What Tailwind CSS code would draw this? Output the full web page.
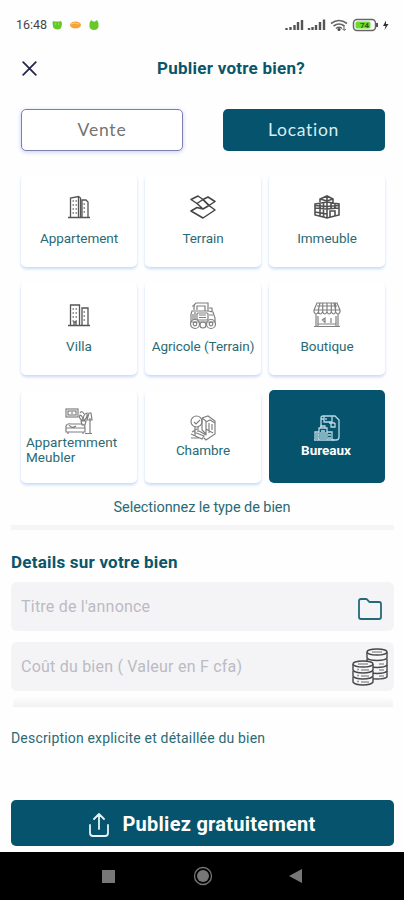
<!DOCTYPE html>
<html lang="fr">
<head>
    <meta charset="UTF-8">
    <meta name="viewport" content="width=device-width, initial-scale=1.0">
    <title>Publier votre bien</title>
    <script src="https://cdn.jsdelivr.net/npm/@tailwindcss/browser@4"></script>
</head>
<body class="bg-[#fefefe] font-[Roboto,sans-serif] text-[#2b6a74]">
    <div class="w-[404px] h-[900px] flex flex-col overflow-hidden">

        <!-- Status bar -->
        <div class="h-12 shrink-0 flex items-center pl-4 pr-[13px] pt-[2px] text-[#444]">
            <span class="w-[31px] text-[12.5px] leading-4 whitespace-nowrap">16:48</span>
            <svg class="ml-[5px]" width="47" height="12" viewBox="0 0 47 12">
                <path d="M1 2l2 .5h4L9 2l1 2-.5 4q-1 2.500-4 2.500T1 8L.5 4z" fill="#66c928"/>
                <path d="M3 5h1M6 5h1" stroke="#b9ed78"/>
                <ellipse cx="23.500" cy="6" rx="5.500" ry="3.500" fill="#f6a33a"/>
                <path d="M19 5q4-2 8 0" stroke="#ffcf83" fill="none"/>
                <path d="M39 1l2 1.500h2L45 1l1.500 3v4q-1 3-4.500 3t-4.500-3V4z" fill="#66c928"/>
            </svg>
            <svg class="ml-auto" width="106" height="14" viewBox="0 0 106 14">
                <g stroke="#555" stroke-width="2.400">
                    <path d="M1.500 12v-2M5.500 12V9M9.500 12V7M13 12V4M17 12V2"/>
                    <path d="M24 12v-2M27.500 12V9M31 12V7M35 12V4M39 12V1.500"/>
                </g>
                <g fill="none" stroke="#666" stroke-width="1.600">
                    <path d="M46 5.500q8-6 16 0M48.500 8q5.500-4 11 0M51 10.500q3-2.500 6 0"/>
                </g>
                <circle cx="54" cy="11.500" r="1.500" fill="#444"/>
                <path d="M59 8v4M57.500 11l1.500 1.500 2-1.500" stroke="#666" fill="none"/>
                <rect x="68.500" y="1.500" width="22" height="11" rx="3.500" fill="#fff" stroke="#666" stroke-width="1.500"/>
                <rect x="70.500" y="3.500" width="15" height="7" rx="1.500" fill="#6edb2c"/>
                <path d="M92 5v4" stroke="#555" stroke-width="2"/>
                <text x="75" y="10" font-size="8" font-weight="700" font-family="Roboto" fill="#2d5c14">74</text>
                <path d="M101 2.500L98 8h2.500l-1 4 4-6h-2.500z" fill="#333"/>
            </svg>
        </div>

        <!-- Header -->
        <div class="h-10 shrink-0 flex items-center pl-[22px]">
            <svg width="15" height="15" viewBox="0 0 15 15" fill="none" stroke="#28284a" stroke-width="1.800" stroke-linecap="round">
                <path d="M1.200 1.200l12.600 12.600M13.800 1.200L1.200 13.800"/>
            </svg>
            <h1 class="ml-[120px] pt-px text-[17px] font-bold text-[#0a556a] whitespace-nowrap tracking-[0.25px]">Publier votre bien?</h1>
        </div>

        <!-- Vente / Location -->
        <div class="mt-[21px] shrink-0 flex justify-between pl-[21px] pr-[19.5px]">
            <button class="w-[162px] h-[42px] rounded-[5px] border border-[#7f7fae] bg-white font-[Lato,sans-serif] text-[17.5px] tracking-[0.8px] text-[#747474] shadow-[0_1px_4px_#c0cdfa]">Vente</button>
            <button class="w-[162px] h-[42px] rounded-[5px] bg-[#05536c] font-[Lato,sans-serif] text-[17.5px] tracking-[0.7px] text-[#d5edf4]">Location</button>
        </div>

        <!-- Types de bien -->
        <div class="mt-[23px] ml-[21px] shrink-0 grid grid-cols-[repeat(3,116px)] auto-rows-[93px] gap-x-2 gap-y-[15px] text-[13.5px] leading-[15px] whitespace-nowrap">
            <div class="flex flex-col items-center pt-[21px] rounded-[5px] bg-white shadow-[0_2px_3px_#c6dcf8]">
                <svg width="22" height="24" viewBox="0 0 22 24" fill="none" stroke="#555" stroke-width="1.300">
                    <path d="M0 22.500h22M2.500 22V3l8-1.500 2 1.500v19M14 22V5h4l2 2v15M10.500 2v20"/>
                    <path d="M4.500 6h5M4.500 10h5M4.500 14h5M4.500 18h5M15.500 9h3M15.500 13h3M15.500 17h3" stroke="#777" stroke-dasharray="1.500 1.500"/>
                </svg>
                <span class="mt-[12px] tracking-[-0.05px]">Appartement</span>
            </div>
            <div class="flex flex-col items-center pt-[21px] rounded-[5px] bg-white shadow-[0_2px_3px_#c6dcf8]">
                <svg width="26" height="24" viewBox="0 0 26 24" fill="none" stroke="#444" stroke-width="1.500" stroke-linejoin="round">
                    <path d="M1 4.500L8 1l5 3.500-6 4zM13 4.500L18 2l7 4.500-6 4z"/>
                    <path d="M13 4.500L19 10.500 13 14 7 8.500M13 14l-6-1.500L1 16l12 7 12-8-6-4.500"/>
                </svg>
                <span class="mt-[12px] tracking-[-0.05px]">Terrain</span>
            </div>
            <div class="flex flex-col items-center pt-[21px] rounded-[5px] bg-white shadow-[0_2px_3px_#c6dcf8]">
                <svg width="26" height="24" viewBox="0 0 26 24" fill="none" stroke="#505050" stroke-width="1.600">
                    <path d="M1 9l12-2 12 2v11l-12 3-12-3zM6 7V4l7-3 6 3v4M13 1v22M1 13l12 1 12-1M1 17l12 2M6 8v13M9.500 7v15M17 8v6M21 8v6"/>
                    <path d="M16 22v-6h5v5M6 4l7 2 6-2M1 10.500l12 1 12-1"/>
                </svg>
                <span class="mt-[12px] tracking-[-0.05px]">Immeuble</span>
            </div>

            <div class="flex flex-col items-center pt-[21px] rounded-[5px] bg-white shadow-[0_2px_3px_#c9d9fa]">
                <svg width="22" height="24" viewBox="0 0 22 24" fill="none" stroke="#555" stroke-width="1.300">
                    <path d="M0 22.500h22M2.500 22V2h9v20M14 22V5h6v17M11.500 3v19"/>
                    <path d="M4.500 6h5M4.500 10h5M4.500 14h5M4.500 18h5M15.500 9h3M15.500 13h3M15.500 17h3" stroke="#777" stroke-dasharray="1.500 1.500"/>
                    <path d="M6 22v-3h2v3"/>
                </svg>
                <span class="mt-[12px]">Villa</span>
            </div>
            <div class="flex flex-col items-center pt-[20px] rounded-[5px] bg-white shadow-[0_2px_3px_#c9d9fa]">
                <svg width="28" height="28" viewBox="0 0 28 28" fill="none" stroke="#808080" stroke-width="1.200">
                    <path d="M5 8V3l2-2h12v8M8 8V4h8v5M3 9h16l5 1 2 6v4H2v-8zM3 4h3M20 6h3v4"/>
                    <rect x="8" y="11" width="11" height="7" rx="1"/>
                    <path d="M10 13h7M10 15.500h7M20 13h4M4 12v6M6 10v7"/>
                    <circle cx="6" cy="22" r="4.500"/><circle cx="6" cy="22" r="1.800"/>
                    <circle cx="14" cy="23" r="3"/><circle cx="22" cy="22" r="4.500"/><circle cx="22" cy="22" r="1.800"/>
                </svg>
                <span class="mt-[9px] tracking-[-0.05px]">Agricole (Terrain)</span>
            </div>
            <div class="flex flex-col items-center pt-[20px] rounded-[5px] bg-white shadow-[0_2px_3px_#c9d9fa]">
                <svg width="28" height="26" viewBox="0 0 28 26" fill="none" stroke="#808080" stroke-width="1.200">
                    <path d="M4 1h20l3 7v2q-2 4-4.300 0-2.200 4-4.400 0-2.100 4-4.300 0-2.200 4-4.400 0-2.200 4-4.300 0Q3 14 1 10V8zM1 8h26M4 4h20M5.500 8V12M9.700 1v10M14 1v10M18.300 1v10M22.500 1v10M7 1L5.300 8M21 1l1.700 7M3 12v12M25 12v12M1 24.500h26M5 14v10M23 14v10M5 22h18"/>
                    <path d="M9 18l3-2v5M9 18l3 2M18 16v5"/>
                </svg>
                <span class="mt-[11px] tracking-[-0.05px]">Boutique</span>
            </div>

            <div class="flex flex-col items-center pt-[17px] rounded-[5px] bg-white shadow-[0_2px_3px_#c6dcf8]">
                <svg width="28" height="28" viewBox="0 0 28 28" fill="none" stroke="#808080" stroke-width="1.200">
                    <rect x="1" y="2" width="12" height="8"/><rect x="3" y="4" width="8" height="4"/>
                    <path d="M7 5v2M1 25v-6q1-3 5-2h10q4 0 4 4v4H1zM1 21h19M4 18q3 4 7 1M3 25v2M18 25v2M20 26.500h7M25 26V11M22 13l2-7h2l1 7zM16 14h5l-1 4h-3zM18 14q-5-3-3-6 3 1 3 6 0-7 4-8 1 5-4 8M15 6q2-3 4 1"/>
                </svg>
                <span class="ml-[5px] self-start tracking-[0.05px]">Appartemment<br>Meubler</span>
            </div>
            <div class="flex flex-col items-center pt-[25px] rounded-[5px] bg-white shadow-[0_2px_3px_#c6dcf8]">
                <svg width="26" height="26" viewBox="0 0 26 26" fill="none" stroke="#808080" stroke-width="1.200">
                    <circle cx="6.500" cy="6.500" r="5.500"/><path d="M4 7l2 2 4-4M5 12v9M8 12v5M2 17l5-3M1 19l11 5 2-3-10-4M1 23h8M12 3l6-2 7 5v13l-9 6-2-2M12 3v12l4 4V6l-4-3M16 7l4-2 5 3M19 8v10M22 9v6M16 14l7 4M9 16l7 4"/>
                </svg>
                <span class="mt-[2px] tracking-[-0.05px]">Chambre</span>
            </div>
            <div class="flex flex-col items-center pt-[25px] rounded-[5px] bg-[#05536c] text-white">
                <svg width="26" height="26" viewBox="0 0 26 26" fill="none" stroke="#b8d9e3" stroke-width="1.300">
                    <path d="M7 12V3q0-2 2-2h12l4 4v17q0 3-3 3h-4M10 1v6h8V1M12 3v2M15 8h6M17 8v4h4V8M7 4h3"/>
                    <path d="M1 25v-8h4v-4h8v4h5v8zM0 25h20M5 17v8M13 17v8M7 13v-2h4v2M7 16h4M7 19h4M7 22h4M2 20h3M2 23h3M14 20h3M14 23h3"/>
                    <path d="M6 17h7v8H6zM1 18h3v7H1z" fill="#80b1c0" stroke="none"/>
                </svg>
                <span class="mt-[2px] mr-[2px] font-bold">Bureaux</span>
            </div>
        </div>

        <p class="mt-[14px] pt-px h-5 shrink-0 text-center text-[14.5px] leading-5 tracking-[-0.07px]">Selectionnez le type de bien</p>
        <div class="mt-[8px] ml-[11px] w-[383px] h-[5px] shrink-0 bg-[#f5f5f6]"></div>

        <!-- Details -->
        <h2 class="mt-[22px] ml-[11px] h-5 shrink-0 text-[17px] leading-5 font-bold text-[#0a556a] tracking-[0.22px]">Details sur votre bien</h2>
        <div class="mt-[10px] ml-[11px] w-[383px] h-[49px] shrink-0 rounded-md bg-[#f4f4f7] flex items-center justify-between pl-[10px] pr-3 text-[16px] text-[#bbbbc2]">
            <span class="tracking-[0.22px]">Titre de l'annonce</span>
            <svg class="mt-[5px]" width="24" height="22" viewBox="0 0 24 22" fill="none" stroke="#24697b" stroke-width="1.800" stroke-linejoin="round">
                <path d="M1 3q0-2 2-2h5q1 0 2 1.500T12 4h9q2 0 2 2v13q0 2-2 2H3q-2 0-2-2z"/>
            </svg>
        </div>
        <div class="mt-[11px] ml-[11px] w-[383px] h-[49px] shrink-0 rounded-md bg-[#f4f4f7] flex items-center justify-between pl-[10px] pr-[6px] text-[16px] text-[#bbbbc2]">
            <span class="tracking-[0.22px]">Coût du bien ( Valeur en F cfa)</span>
            <svg class="mt-px" width="36" height="38" viewBox="0 0 36 38" fill="#f6f6f8" stroke="#484848" stroke-width="1.400">
                <path d="M15 24v5q2 2 10 2t10-2v-6"/>
                <path d="M15 17v6q2 2.500 10 2.500T35 23v-6"/>
                <path d="M15 11v6q2 2.500 10 2.500T35 17v-6"/>
                <path d="M15 4v6q2 2.500 10 2.500T35 10V4"/>
                <ellipse cx="25" cy="4" rx="10" ry="3"/>
                <path d="M20 4h10M19 15.500h2M27 16h5M27 22h5M27 28h5" stroke="#999"/>
                <path d="M1 29v5q2 3 10 3t10-3v-5"/>
                <path d="M1 23v5q2 3 10 3t10-3v-5"/>
                <path d="M1 16v6q2 3 10 3t10-3v-6"/>
                <ellipse cx="11" cy="16" rx="10" ry="3"/>
                <path d="M6 16h10M5 21.500h2M9 22h8M5 27.500h2M9 28h8M5 33.500h2M9 34h8" stroke="#999"/>
            </svg>
        </div>
        <div class="mt-[6px] ml-[13px] w-[380px] h-[10px] shrink-0 rounded-t-md bg-linear-to-b from-[#fcfcfc] to-[#f2f2f4]"></div>
        <p class="mt-[22px] ml-[11px] h-[18px] shrink-0 text-[14px] leading-[18px] tracking-[0.18px]">Description explicite et détaillée du bien</p>

        <button class="mt-[53px] ml-[11px] w-[383px] h-[46px] shrink-0 rounded-[5px] bg-[#05536c] text-white flex items-center justify-center gap-[13px] text-[20px] font-bold">
            <svg class="mt-[3px]" width="20" height="24" viewBox="0 0 20 24" fill="none" stroke="#e5f3f7" stroke-width="1.800" stroke-linecap="round" stroke-linejoin="round">
                <path d="M1 12v8q0 3 3 3h12q3 0 3-3v-8M10 16V2M5 6l5-5 5 5"/>
            </svg>
            <span class="pt-[2px] tracking-[0.26px]">Publiez gratuitement</span>
        </button>

        <!-- Navigation -->
        <div class="mt-[6px] h-12 shrink-0 bg-black flex items-center pl-[102px]">
            <div class="w-[13px] h-[13px] bg-[#777]"></div>
            <svg class="ml-[78px]" width="20" height="20" viewBox="0 0 20 20">
                <circle cx="10" cy="10" r="8.500" fill="none" stroke="#777" stroke-width="1.300"/>
                <circle cx="10" cy="10" r="6" fill="#777"/>
            </svg>
            <svg class="ml-[76px]" width="13" height="14" viewBox="0 0 13 14"><path d="M13 0v14L0 7z" fill="#777"/></svg>
        </div>
    </div>
</body>
</html>
